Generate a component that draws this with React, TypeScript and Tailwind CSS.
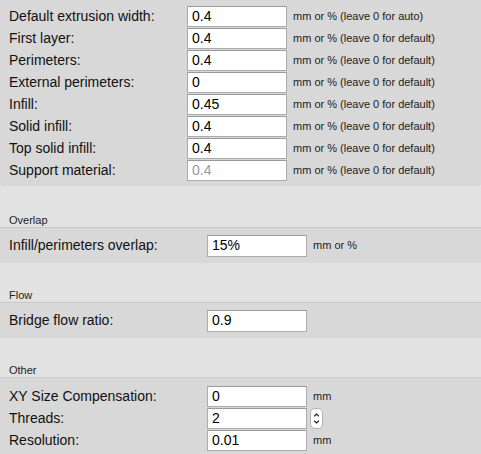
import React from 'react'

type Row = {
  label: string
  value: string
  unit?: string
  disabled?: boolean
  spinner?: boolean
}

const WIDTH_ROWS: Row[] = [
  { label: 'Default extrusion width:', value: '0.4', unit: 'mm or % (leave 0 for auto)' },
  { label: 'First layer:', value: '0.4', unit: 'mm or % (leave 0 for default)' },
  { label: 'Perimeters:', value: '0.4', unit: 'mm or % (leave 0 for default)' },
  { label: 'External perimeters:', value: '0', unit: 'mm or % (leave 0 for default)' },
  { label: 'Infill:', value: '0.45', unit: 'mm or % (leave 0 for default)' },
  { label: 'Solid infill:', value: '0.4', unit: 'mm or % (leave 0 for default)' },
  { label: 'Top solid infill:', value: '0.4', unit: 'mm or % (leave 0 for default)' },
  { label: 'Support material:', value: '0.4', unit: 'mm or % (leave 0 for default)', disabled: true },
]

const OTHER_ROWS: Row[] = [
  { label: 'XY Size Compensation:', value: '0', unit: 'mm' },
  { label: 'Threads:', value: '2', spinner: true },
  { label: 'Resolution:', value: '0.01', unit: 'mm' },
]

function Spinner() {
  return (
    <div className="ml-[3px] w-[13px] h-[21px] rounded-[5px] bg-white border border-[#b4b4b4] flex items-center justify-center">
      <svg width="7" height="15" viewBox="0 0 7 15" fill="none" stroke="#222" strokeWidth="1.1" strokeLinecap="round" strokeLinejoin="round">
        <polyline points="1.5 5 3.5 3 5.5 5" />
        <polyline points="1.5 10 3.5 12 5.5 10" />
      </svg>
    </div>
  )
}

function Input({ value, h, disabled }: { value: string; h: string; disabled?: boolean }) {
  return (
    <div
      className={`w-[100px] ${h} bg-white border border-[#acacac] border-t-[#9a9a9a] flex items-center px-[4px] text-[14px] ${
        disabled ? 'text-[#9a9a9a]' : 'text-black'
      }`}
    >
      {value}
    </div>
  )
}

function Field({ row, labelW }: { row: Row; labelW: string }) {
  return (
    <div className="flex items-center h-[22px]">
      <div className={`${labelW} shrink-0 pl-[9px] text-[14px] text-[#111]`}>{row.label}</div>
      <Input value={row.value} h="h-[21px]" disabled={row.disabled} />
      {row.spinner && <Spinner />}
      {row.unit && <div className="ml-[6px] text-[11px] text-[#222]">{row.unit}</div>}
    </div>
  )
}

function GroupLabel({ text, h }: { text: string; h: string }) {
  return (
    <div className={`${h} flex items-end pl-[9px] text-[11px] leading-[13px] text-[#222]`}>{text}</div>
  )
}

export default function App() {
  return (
    <div
      className="w-[481px] h-[454px] overflow-hidden bg-[#e2e2e2]"
      style={{ fontFamily: '"Liberation Sans", Arial, sans-serif' }}
    >
      {/* Extrusion width */}
      <div className="bg-[#d8d8d8] pt-[5px] pb-[5px] rounded-b-[3px]">
        {WIDTH_ROWS.map(r => (
          <Field key={r.label} row={r} labelW="w-[187px]" />
        ))}
      </div>

      {/* Overlap */}
      <GroupLabel text="Overlap" h="h-[41px]" />
      <div className="bg-[#d8d8d8] border-t border-[#c8c8c8] h-[36px] flex items-center">
        <div className="flex items-center h-[22px]">
          <div className="w-[207px] shrink-0 pl-[9px] text-[14px] text-[#111]">Infill/perimeters overlap:</div>
          <Input value="15%" h="h-[22px]" />
          <div className="ml-[6px] text-[11px] text-[#222]">mm or %</div>
        </div>
      </div>

      {/* Flow */}
      <GroupLabel text="Flow" h="h-[39px]" />
      <div className="bg-[#d8d8d8] border-t border-[#c8c8c8] h-[36px] flex items-center">
        <div className="flex items-center h-[22px]">
          <div className="w-[207px] shrink-0 pl-[9px] text-[14px] text-[#111]">Bridge flow ratio:</div>
          <Input value="0.9" h="h-[22px]" />
        </div>
      </div>

      {/* Other */}
      <GroupLabel text="Other" h="h-[39px]" />
      <div className="bg-[#d8d8d8] border-t border-[#c8c8c8] pt-[7px] pb-[6px]">
        {OTHER_ROWS.map(r => (
          <Field key={r.label} row={r} labelW="w-[207px]" />
        ))}
      </div>
    </div>
  )
}
